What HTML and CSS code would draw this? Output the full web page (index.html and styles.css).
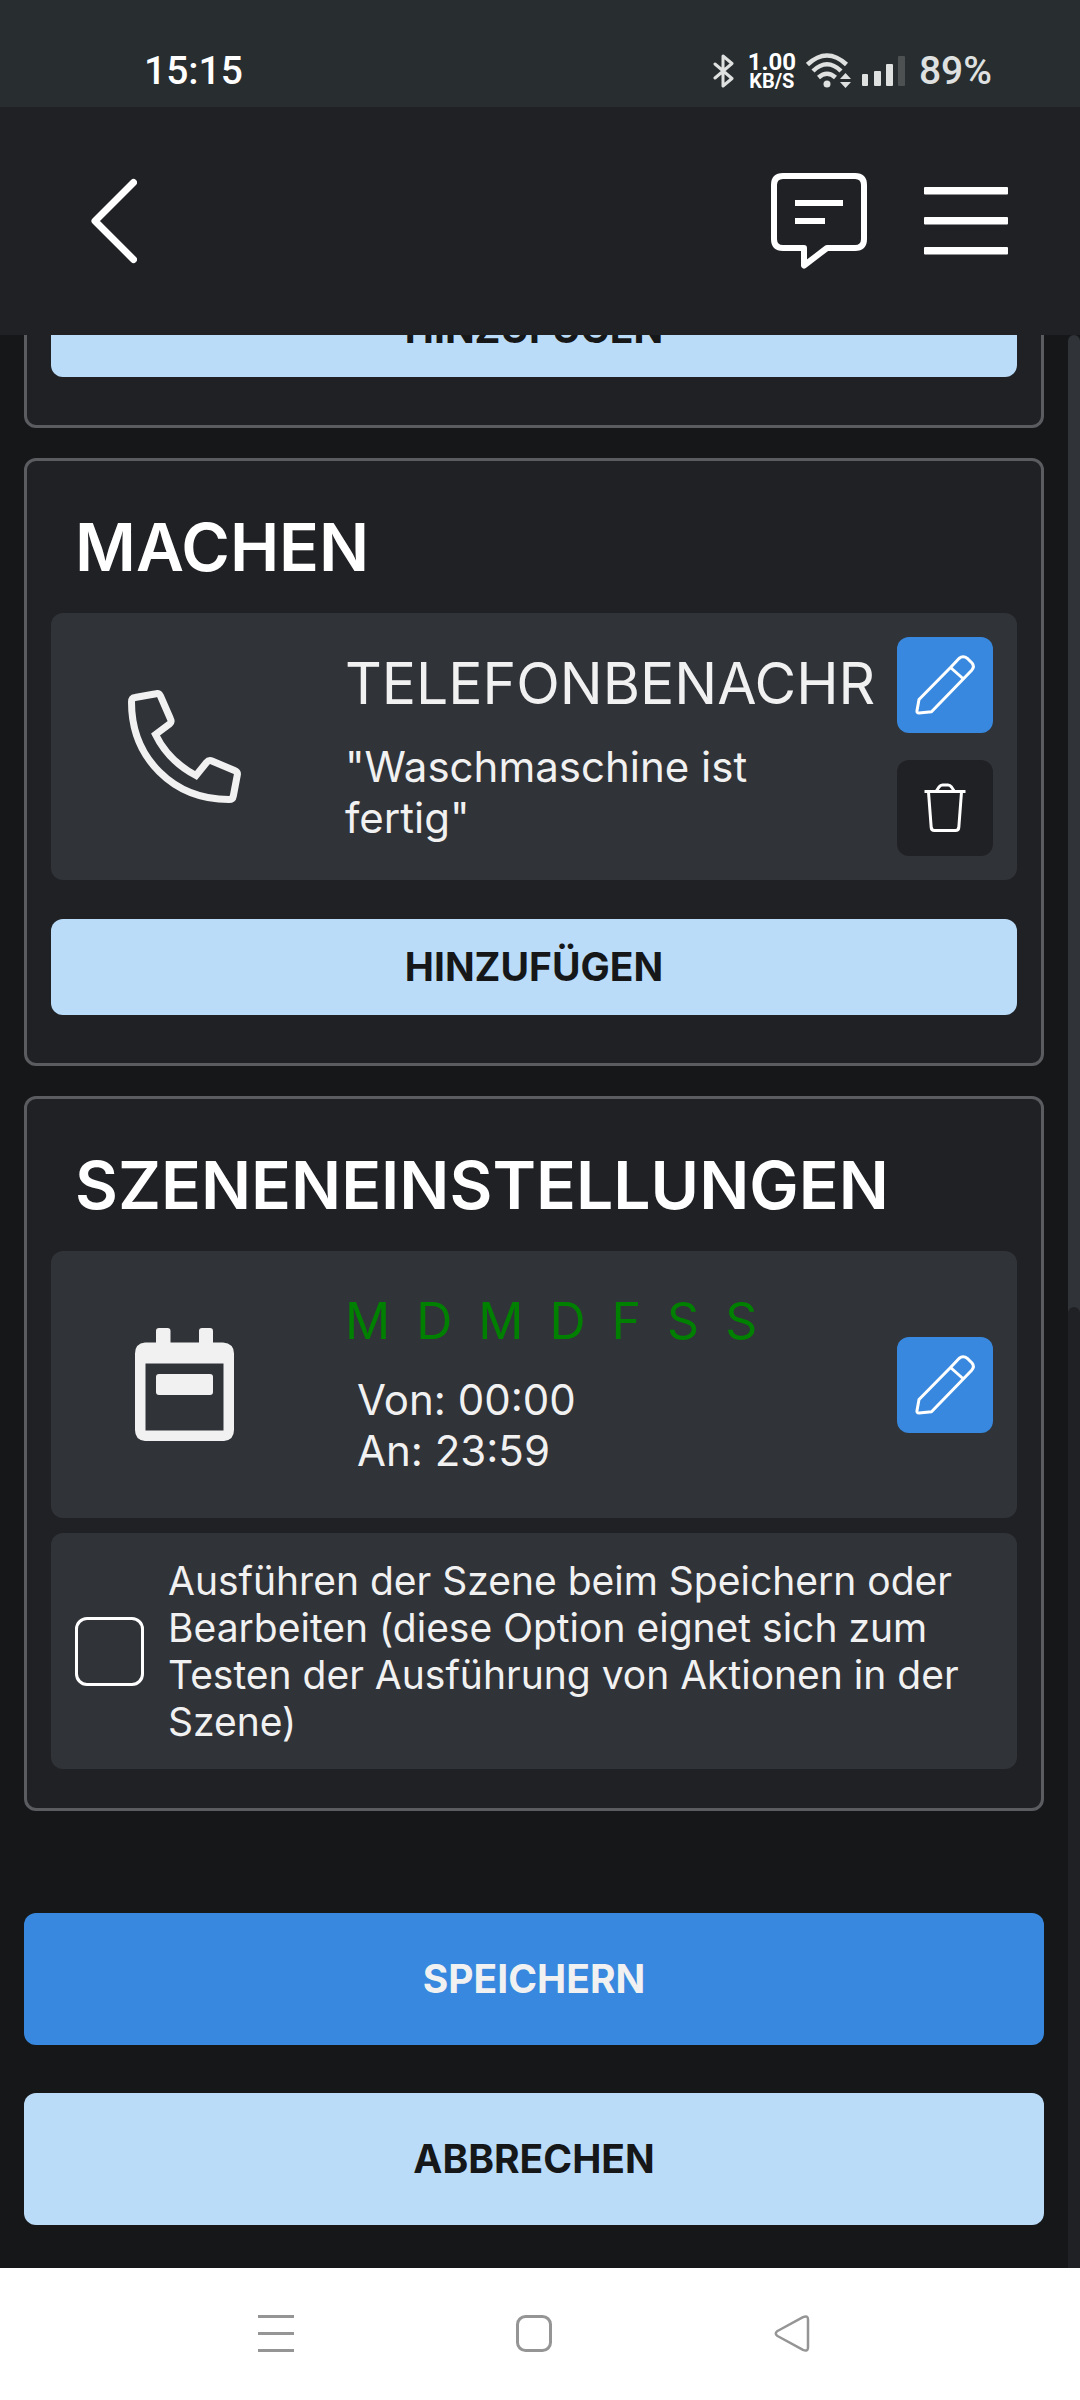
FILE: index.html
```html
<!DOCTYPE html>
<html lang="de">
<head>
<meta charset="utf-8">
<meta name="viewport" content="width=device-width, initial-scale=1">
<title>Szene bearbeiten</title>
<link rel="stylesheet" href="styles.css">
</head>
<body>
<div class="statusbar">
  <span class="clock">15:15</span>
  <div class="status-icons">
    <svg width="21" height="34" viewBox="0 0 21 34" fill="none" stroke="#dfe1e1" stroke-width="3" stroke-linecap="round" stroke-linejoin="round" aria-hidden="true"><path d="M2 10L19 24.500L10 32V2L19 9.500L2 24"/></svg>
    <div class="netspeed"><span class="net-value">1.00</span><span class="net-unit">KB/S</span></div>
    <svg width="46" height="36" viewBox="0 0 46 36" aria-hidden="true">
      <g fill="none" stroke="#dfe1e1" stroke-width="4.500"><path d="M1.500 11.500Q21 -6.500 40.500 11.500"/><path d="M7 18Q21 4.500 35 18"/><path d="M12.500 24.500Q21 17 29.500 24.500"/></g>
      <circle cx="21" cy="31" r="3.500" fill="#dfe1e1"/>
      <path d="M34 26L39.500 20L45 26ZM34 29L39.500 35L45 29Z" fill="#dfe1e1"/>
    </svg>
    <svg width="43" height="30" viewBox="0 0 43 30" fill="#dfe1e1" aria-hidden="true"><rect y="18" width="6" height="12" rx="1"/><rect x="12" y="15" width="7" height="15" rx="1"/><rect x="24" y="8" width="7" height="22" rx="1"/><rect x="36" width="7" height="30" rx="1" fill="#4d5152"/></svg>
    <span class="battery">89%</span>
  </div>
</div>

<header class="appbar">
  <button class="bare" type="button" aria-label="Zurück">
    <svg width="46" height="86" viewBox="0 0 46 86" fill="none" stroke="#fff" stroke-width="7" stroke-linecap="round" stroke-linejoin="round"><path d="M42.500 4.500L4 43L42.500 81.500"/></svg>
  </button>
  <div class="appbar-actions">
    <button class="bare" type="button" aria-label="Nachrichten">
      <svg width="96" height="96" viewBox="0 0 96 96" fill="none" stroke="#fff" stroke-width="6" stroke-linejoin="round"><path d="M33 75H12Q3 75 3 66V12Q3 3 12 3H84Q93 3 93 12V66Q93 75 84 75H56L33 92.500Z"/><path d="M24 30H72M24 48H54"/></svg>
    </button>
    <button class="bare" type="button" aria-label="Menü">
      <svg width="84" height="68" viewBox="0 0 84 68" fill="#fff"><rect width="84" height="7.500" rx="1"/><rect y="30" width="84" height="7.500" rx="1"/><rect y="60" width="84" height="7.500" rx="1"/></svg>
    </button>
  </div>
</header>

<div class="viewport">
  <main class="content">
    <section class="card" aria-label="Bedingungen">
      <button class="btn btn-add" type="button">HINZUFÜGEN</button>
    </section>

    <section class="card">
      <h2 class="card-title">MACHEN</h2>
      <div class="item">
        <svg class="item-icon" width="113" height="113" viewBox="0 0 113 113" fill="none" stroke="#f1f1f1" stroke-width="7" aria-hidden="true"><path d="M7 7.500L28 3.700Q31 3 32.500 6L42.500 29Q44 32 41.500 34L27.500 44.500C36 62 50 76 68 85.500L78.500 72.500Q81 69.500 84 71L106.500 80.500Q110 82 109.300 85L105.300 106Q104.700 109.500 101 109.500C45 109.500 3.500 68 3.500 12Q3.500 8 7 7.500Z"/></svg>
        <div class="item-text">
          <h3 class="item-title">TELEFONBENACHR</h3>
          <p class="item-sub">"Waschmaschine ist fertig"</p>
        </div>
        <div class="item-actions">
          <button class="icon-btn icon-btn-edit" type="button" aria-label="Bearbeiten">
            <svg width="96" height="96" viewBox="0 0 96 96"><path d="M53.500 30.500L22 62.500L20 73.500Q19.500 76 22 76L34.500 74.800L66.500 41.700L74.500 33.500Q78 29.500 75 26L70.500 21.500Q66 18 62 21.500ZM53.500 30.500L66.500 42"/></svg>
          </button>
          <button class="icon-btn" type="button" aria-label="Löschen">
            <svg width="96" height="96" viewBox="0 0 96 96"><path d="M27.500 31.500H68.500M39 31.500L42 27Q43.500 25 45.500 25H51Q53 25 54.500 27L57.500 31.500M31.500 32L34.200 67.500Q34.500 70.500 37.500 70.500H58.500Q61.500 70.500 61.800 67.500L64.500 32"/></svg>
          </button>
        </div>
      </div>
      <button class="btn btn-add" type="button">HINZUFÜGEN</button>
    </section>

    <section class="card">
      <h2 class="card-title">SZENENEINSTELLUNGEN</h2>
      <div class="item">
        <svg class="item-icon" width="99" height="113" viewBox="0 0 99 113" fill="#f1f1f1" aria-hidden="true"><path fill-rule="evenodd" d="M21 14.500V3Q21 0 24 0H32.500Q35.500 0 35.500 3V14.500H64V3Q64 0 67 0H75Q78 0 78 3V14.500H88Q99 15.500 99 25.500V102Q99 112 89 113H10Q0 112 0 102V25.500Q0 15.500 10 14.500ZM10.500 35.500V102.500H88.500V35.500Z"/><rect x="21" y="46" width="57" height="21" rx="3"/></svg>
        <div class="item-text">
          <div class="days"><span>M</span><span>D</span><span>M</span><span>D</span><span>F</span><span>S</span><span>S</span></div>
          <p class="item-sub times">Von: 00:00<br>An: 23:59</p>
        </div>
        <div class="item-actions">
          <button class="icon-btn icon-btn-edit" type="button" aria-label="Zeitplan bearbeiten">
            <svg width="96" height="96" viewBox="0 0 96 96"><path d="M53.500 30.500L22 62.500L20 73.500Q19.500 76 22 76L34.500 74.800L66.500 41.700L74.500 33.500Q78 29.500 75 26L70.500 21.500Q66 18 62 21.500ZM53.500 30.500L66.500 42"/></svg>
          </button>
        </div>
      </div>
      <label class="item option">
        <input class="checkbox" type="checkbox">
        <span class="option-text">Ausführen der Szene beim Speichern oder Bearbeiten (diese Option eignet sich zum Testen der Ausführung von Aktionen in der Szene)</span>
      </label>
    </section>

    <div class="form-actions">
      <button class="btn btn-large btn-primary" type="button">SPEICHERN</button>
      <button class="btn btn-large" type="button">ABBRECHEN</button>
    </div>
  </main>
  <div class="scrollbar"><div class="scrollbar-rest"></div></div>
</div>

<nav class="navbar" aria-label="System">
  <button class="bare" type="button" aria-label="Letzte Apps"><svg width="36" height="37" viewBox="0 0 36 37" fill="none" stroke="#959595" stroke-width="3"><path d="M0 1.500H36M0 18.500H36M0 35.500H36"/></svg></button>
  <button class="bare" type="button" aria-label="Startbildschirm"><svg width="36" height="37" viewBox="0 0 36 37" fill="none" stroke="#959595" stroke-width="3"><rect x="1.500" y="1.500" width="33" height="34" rx="8"/></svg></button>
  <button class="bare" type="button" aria-label="Zurück"><svg width="36" height="37" viewBox="0 0 36 37" fill="none" stroke="#959595" stroke-width="2.500" stroke-linejoin="round"><path d="M29 2.200Q34 0 34 4.500V32.500Q34 37 29 34.800L3.500 21Q0 18.500 3.500 16Z"/></svg></button>
</nav>
</body>
</html>
```

FILE: styles.css
```css
* {
  box-sizing: border-box;
}

body {
  margin: 0;
  height: 100vh;
  display: flex;
  flex-direction: column;
  background: #151719;
  color: #f1f1f1;
  font-family: Inter, "Liberation Sans", sans-serif;
}

button {
  font: inherit;
  border: 0;
  padding: 0;
}

svg {
  display: block;
}

h2,
h3,
p {
  margin: 0;
}

.bare {
  background: none;
}

/* Phone status bar */
.statusbar {
  flex: none;
  display: flex;
  justify-content: space-between;
  align-items: center;
  height: 107px;
  padding: 34px 88px 0 144px;
  background: #282d2f;
  font-family: Roboto, sans-serif;
  font-size: 39px;
  font-weight: 500;
}

.clock {
  color: #fff;
}

.status-icons {
  display: flex;
  align-items: center;
  gap: 10px;
}

.battery {
  color: #dfe1e1;
  padding-left: 4px;
}

.netspeed {
  display: flex;
  flex-direction: column;
  align-items: center;
  padding-left: 4px;
  color: #fff;
  font-weight: 700;
}

.net-value {
  font-size: 24px;
  line-height: 20px;
}

.net-unit {
  font-size: 20px;
  line-height: 18px;
}

/* App header */
.appbar {
  flex: none;
  display: flex;
  justify-content: space-between;
  align-items: center;
  height: 228px;
  padding: 0 72px 0 91px;
  background: #202125;
}

.appbar-actions {
  display: flex;
  align-items: center;
  gap: 57px;
}

/* Scrolled area, resting at its end */
.viewport {
  flex: 1;
  min-height: 0;
  display: flex;
}

.content {
  flex: 1;
  min-width: 0;
  display: flex;
  flex-direction: column;
  justify-content: flex-end;
  gap: 30px;
  padding: 0 24px 43px;
  overflow: hidden;
}

.scrollbar {
  flex: none;
  width: 12px;
  display: flex;
  align-items: flex-end;
  border-radius: 6px 6px 0 0;
  background: #303338;
}

.scrollbar-rest {
  width: 100%;
  height: 49.7%;
  border-radius: 6px 6px 0 0;
  background: #202125;
}

.card {
  flex: none;
  padding: 48px 24px 24px;
  border: 3px solid #5a5c60;
  border-radius: 12px;
  background: #202125;
}

.card-title {
  margin-bottom: 28px;
  padding-left: 24px;
  color: #fff;
  font-size: 66px;
  font-weight: 600;
  line-height: 76px;
}

.item {
  display: flex;
  align-items: center;
  min-height: 267px;
  margin-bottom: 15px;
  padding: 24px;
  border-radius: 12px;
  background: #303338;
}

.item-icon {
  flex: none;
  width: 219px;
}

.item-text {
  flex: 1;
  min-width: 0;
  padding-left: 51px;
}

.item-title {
  margin-bottom: 24px;
  font-size: 57px;
  font-weight: 400;
  line-height: 66px;
  white-space: nowrap;
}

.item-sub {
  font-size: 42px;
  line-height: 51px;
}

.days {
  display: flex;
  gap: 26px;
  margin-bottom: 24px;
  color: #008000;
  font-size: 50px;
  line-height: 57px;
}

.times {
  padding-left: 12px;
}

.item-actions {
  flex: none;
  display: flex;
  flex-direction: column;
  gap: 27px;
  padding-left: 24px;
}

.icon-btn {
  width: 96px;
  height: 96px;
  border-radius: 12px;
  background: #202125;
}

.icon-btn-edit {
  background: #3788de;
}

.icon-btn svg {
  fill: none;
  stroke: #fff;
  stroke-width: 3px;
  stroke-linejoin: round;
}

.option {
  gap: 24px;
  min-height: 0;
}

.checkbox {
  flex: none;
  appearance: none;
  width: 69px;
  height: 69px;
  margin: 0;
  border: 3px solid #fff;
  border-radius: 12px;
}

.option-text {
  font-size: 39px;
  line-height: 47px;
}

.btn {
  width: 100%;
  min-height: 96px;
  padding-bottom: 2px;
  border-radius: 12px;
  background: #badcf8;
  color: #151719;
  font-size: 39px;
  font-weight: 700;
}

.btn-add {
  margin: 24px 0;
}

.btn-large {
  min-height: 132px;
}

.btn-primary {
  background: #3788de;
  color: #f1f1f1;
}

.form-actions {
  flex: none;
  display: flex;
  flex-direction: column;
  gap: 48px;
  padding-top: 72px;
}

/* Phone navigation bar */
.navbar {
  flex: none;
  display: flex;
  justify-content: space-between;
  align-items: center;
  height: 132px;
  padding: 0 270px 2px 258px;
  background: #fff;
}
```
